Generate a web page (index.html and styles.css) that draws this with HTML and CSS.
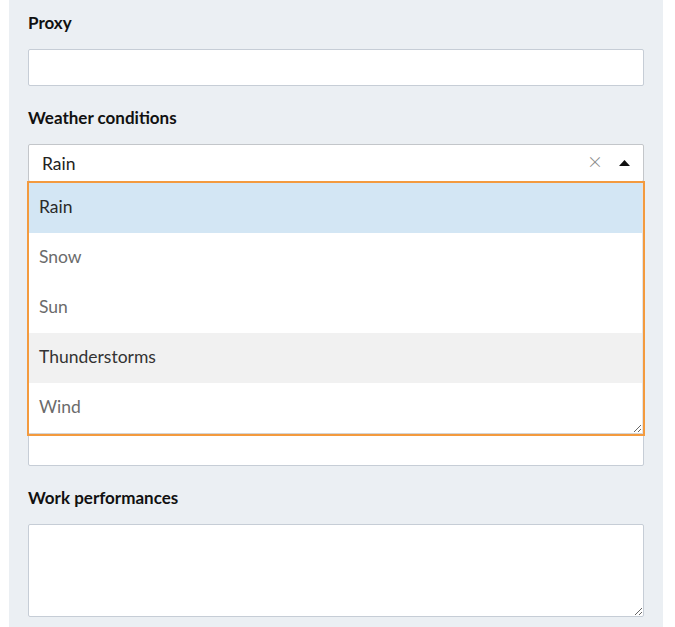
FILE: index.html
```html
<!DOCTYPE html>
<html lang="en">
<head>
    <meta charset="UTF-8">
    <meta name="viewport" content="width=device-width, initial-scale=1.0">
    <title>Report form</title>
<link rel="stylesheet" href="styles.css">
</head>
<body>
    <div class="page">
        <form class="panel">
            <div class="field">
                <label class="label">Proxy</label>
                <input class="input" type="text">
            </div>
            <div class="field">
                <label class="label">Weather conditions</label>
                <div class="select">
                    <span class="select-value">Rain</span>
                    <span class="select-clear">&times;</span>
                    <svg class="select-arrow" width="11" height="6" viewBox="0 0 11 6"><path d="M0 6 L5.5 0 L11 6 Z" fill="#111"/></svg>
                    <div class="dropdown">
                        <ul class="options">
                            <li class="option selected">Rain</li>
                            <li class="option">Snow</li>
                            <li class="option">Sun</li>
                            <li class="option hover">Thunderstorms</li>
                            <li class="option">Wind</li>
                        </ul>
                    </div>
                </div>
            </div>
            <!-- fields under the open dropdown -->
            <div class="field covered">
                <input class="input" type="text">
            </div>
            <div class="field">
                <label class="label">Work performances</label>
                <textarea class="textarea"></textarea>
            </div>
        </form>
    </div>
</body>
</html>
```

FILE: styles.css
```css
*{
    margin: 0px;
    box-sizing: border-box;
}
body{
    background: #fff;
    font-family: Lato, "Open Sans", sans-serif;
    overflow: hidden;
}
.page{
    padding: 0 12px 0 9px;
}
.panel{
    width: 654px;
    background: #ebeff3;
    padding: 13px 19px 40px;
    display: flex; flex-direction: column; gap: 22px;
}
.field{
    display: flex; flex-direction: column;
}
.covered{
    padding-top: 225px;
}
.label{
    font-size: 17px; line-height: 20px;
    font-weight: 700; color: #111;
    margin-bottom: 16px;
}
.input{
    height: 37px;
    border: 1px solid #c6cdd6; border-radius: 2px;
    background: #fff;
    font: inherit;
}
.textarea{
    height: 93px;
    border: 1px solid #c6cdd6; border-radius: 2px;
    background: #fff;
    font: inherit;
    resize: vertical;
}
.select{
    position: relative;
    height: 38px;
    border: 1px solid #c3c6ca; border-radius: 2px;
    background: #fff;
    display: flex; align-items: center;
    padding: 0 13px;
    font-size: 17.5px; color: #222;
}
.select-value{
    flex: 1;
}
.select-clear{
    color: #8a8a8a; font-size: 24px; line-height: 20px;
    margin-right: 17px; margin-top: -5px;
    font-weight: 300;
}
.select-arrow{
    margin-top: -1px;
}
.dropdown{
    position: absolute; top: 36px; left: -2px; right: -2px;
    border: 2px solid #f39a3e;
    background: #fff;
    z-index: 2;
}
.options{
    list-style: none; padding: 0;
    border-bottom: 1px solid #d4d4d4;
    border-right: 1px solid #e4e4e4;
    resize: vertical; overflow: hidden;
}
.option{
    height: 50px; line-height: 48px;
    padding-left: 10px;
    font-size: 17.5px; color: #6b6b6b;
}
.option.selected{
    background: #d3e6f4; color: #2a2a2a;
}
.option.hover{
    background: #f1f1f1; color: #333;
}
```
